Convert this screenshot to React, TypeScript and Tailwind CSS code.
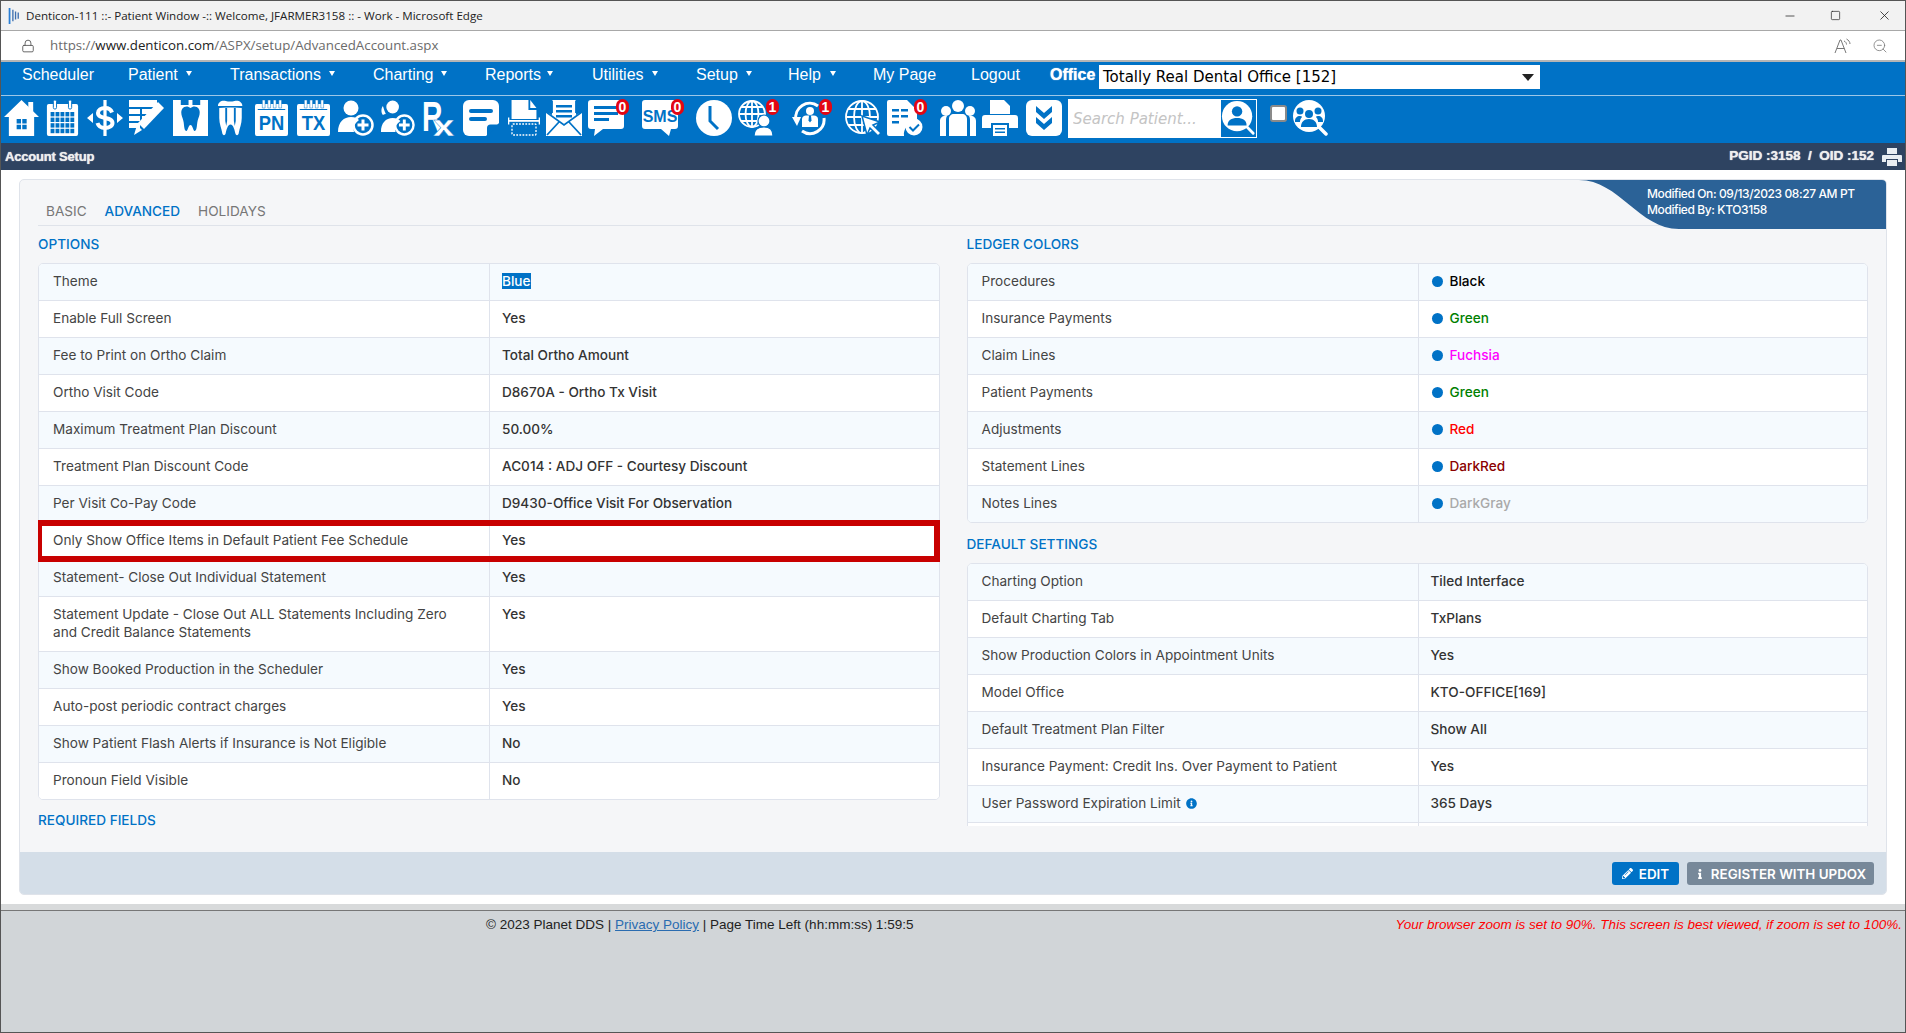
import { Minus, Square, X, Lock, ZoomOut } from 'lucide-react';
import { FaInfo, FaInfoCircle, FaPencilAlt } from 'react-icons/fa';
import type { ReactNode } from 'react';

const BLUE = '#0072c6';

const menu = [
  { label: 'Scheduler', width: 'w-[106px]', caret: '' },
  { label: 'Patient', width: 'w-[102px]', caret: 'left-[58px]' },
  { label: 'Transactions', width: 'w-[143px]', caret: 'left-[99px]' },
  { label: 'Charting', width: 'w-[112px]', caret: 'left-[68px]' },
  { label: 'Reports', width: 'w-[107px]', caret: 'left-[62px]' },
  { label: 'Utilities', width: 'w-[104px]', caret: 'left-[60px]' },
  { label: 'Setup', width: 'w-[92px]', caret: 'left-[50px]' },
  { label: 'Help', width: 'w-[85px]', caret: 'left-[42px]' },
  { label: 'My Page', width: 'w-[98px]', caret: '' },
  { label: 'Logout', width: 'w-[79px]', caret: '' },
];

function Ico({ cls, children, badge, badgeCls }: { cls: string; children: ReactNode; badge?: string; badgeCls?: string }) {
  return (
    <div className={`relative shrink-0 h-[36px] ${cls}`}>
      <svg viewBox="0 0 36 36" preserveAspectRatio="none" className="w-full h-full block" fill="#fff">
        {children}
      </svg>
      {badge && (
        <span className={`absolute -top-[1px] flex items-center justify-center w-[13px] h-[16px] rounded-full bg-[#e30613] text-white text-[14px] leading-none font-bold font-['Liberation_Sans',sans-serif] ${badgeCls}`}>
          {badge}
        </span>
      )}
    </div>
  );
}

const calCells = [0, 1, 2, 3].flatMap((r) => [0, 1, 2, 3, 4].map((c) => ({ x: 5 + c * 5.4, y: 12 + r * 5.6 })));

function IconRow() {
  return (
    <div className="h-[47px] pt-[4px] pl-[3px] flex items-start">
      {/* home */}
      <Ico cls="w-[35px]">
        <path d="M18 0 L36 17 L31 17 L31 36 L5 36 L5 17 L0 17 L9 8.5 Z" />
        <path d="M25 2h5v10l-5-5z" />
        <path fill={BLUE} d="M13 19h4.500v4.500H13zM18.800 19h4.500v4.500h-4.500zM13 24.800h4.500v4.500H13zM18.800 24.800h4.500v4.500h-4.500z" />
      </Ico>
      {/* calendar */}
      <Ico cls="w-[33px] ml-[7px]">
        <rect x="1" y="4" width="34" height="32" rx="2" />
        <rect x="8" y="0" width="3.500" height="9" rx="1.500" stroke={BLUE} />
        <rect x="24.500" y="0" width="3.500" height="9" rx="1.500" stroke={BLUE} />
        {calCells.map((c) => (
          <rect key={`${c.x}-${c.y}`} x={c.x} y={c.y} width="4.200" height="4.400" fill={BLUE} />
        ))}
      </Ico>
      {/* dollar */}
      <Ico cls="w-[36px] ml-[8px]">
        <path d="M0 18l6-5v10zM36 18l-6-5v10z" />
        <path d="M25 12.500c-1-3-4-4.500-7-4.500-4 0-7 2-7 5 0 7 14.500 3 14.500 10 0 3-3.500 5-7.500 5-3.500 0-6.500-1.500-7.500-5" fill="none" stroke="#fff" strokeWidth="4" />
        <rect x="16.400" y="0" width="3.200" height="36" />
      </Ico>
      {/* notes + pencil */}
      <Ico cls="w-[36px] ml-[6px]">
        <path d="M0 0h28v7H0zM0 9h11v5H0zM13 9h13l-5 5h-8zM0 16h11v5H0zM13 16h6l-5 5h-1zM0 23h11v5H0z" />
        <path d="M29 2l6 6-20 21-6-6z" />
        <path d="M8 25l5 5-8 5z" />
      </Ico>
      {/* tooth chart */}
      <Ico cls="w-[35px] ml-[8px]">
        <path d="M0 0h8v5h8V0h4v5h8V0h8v36H0z" />
        <path fill={BLUE} d="M18 8c2-1.500 4-2 6.500-1 2.500 1.200 3.500 4 2.800 7.500-.6 2.800-1.800 4.500-2.300 8-.4 3-.6 8-2.500 8.500-2 .4-2-6-4.500-6s-2.500 6.400-4.500 6c-1.900-.5-2.100-5.500-2.500-8.500-.5-3.500-1.700-5.200-2.300-8-.7-3.500.3-6.300 2.800-7.500 2.500-1 4.500-.5 6.500 1z" />
      </Ico>
      {/* crown */}
      <Ico cls="w-[27px] ml-[9px]">
        <path d="M1 6c0-4 4-6 8-5 3 .8 6 .8 9 0 4-1 8 1 8 5z" transform="scale(1.300 1)" />
        <path d="M3 8c10-1.500 20-1.500 30 0v10c0 6-3 10-4 15-.4 2.500-3.500 3-4.500.5-1-3-2.500-9-6.500-9s-5.500 6-6.500 9c-1 2.500-4 2-4.500-.5C6 28 3 24 3 18z" />
        <path fill={BLUE} d="M11 8h2.500v13l-1.200 5-1.300-5zM22.500 8H25v13l-1.300 5-1.200-5zM3 6h30v1.500H3z" />
      </Ico>
      {/* PN */}
      <Ico cls="w-[33px] ml-[11px]">
        <rect x="0" y="4" width="36" height="32" rx="2" />
        <path d="M8 0h3v8H8zM14 0h3v8h-3zM20 0h3v8h-3zM26 0h3v8h-3z" stroke={BLUE} strokeWidth=".5" />
        <rect x="3" y="9" width="30" height="1" fill={BLUE} />
        <text x="18" y="30" textAnchor="middle" fontFamily="Liberation Sans" fontWeight="700" fontSize="20" fill={BLUE}>PN</text>
      </Ico>
      {/* TX */}
      <Ico cls="w-[33px] ml-[9px]">
        <rect x="0" y="4" width="36" height="32" rx="2" />
        <path d="M8 0h3v8H8zM14 0h3v8h-3zM20 0h3v8h-3zM26 0h3v8h-3z" stroke={BLUE} strokeWidth=".5" />
        <rect x="3" y="9" width="30" height="1" fill={BLUE} />
        <text x="18" y="30" textAnchor="middle" fontFamily="Liberation Sans" fontWeight="700" fontSize="20" fill={BLUE}>TX</text>
      </Ico>
      {/* patient add */}
      <Ico cls="w-[36px] ml-[8px]">
        <circle cx="13" cy="8" r="7.500" />
        <path d="M0 32c0-10 6-15 13-15 4 0 6 1 8 3-4 3-6 7-5 12z" />
        <circle cx="25" cy="25" r="9.500" fill="none" stroke="#fff" strokeWidth="2.500" />
        <path d="M23.500 19.500h3v4h4v3h-4v4h-3v-4h-4v-3h4z" />
      </Ico>
      {/* patients add */}
      <Ico cls="w-[35px] ml-[6px]">
        <circle cx="13" cy="7" r="6.500" />
        <path d="M3 6c-2 2-2 7 0 9 1-.5 2-1 3-1-1-2-2-5-3-8z" />
        <path d="M1 32c0-9 5-14 12-14 4 0 6 1 8 3-4 3-6 6-5 11z" />
        <circle cx="25" cy="25" r="9.500" fill="none" stroke="#fff" strokeWidth="2.500" />
        <path d="M23.500 19.500h3v4h4v3h-4v4h-3v-4h-4v-3h4z" />
      </Ico>
      {/* Rx */}
      <Ico cls="w-[33px] ml-[7px]">
        <text transform="translate(0 31) scale(.72 1)" fontFamily="Liberation Sans" fontWeight="700" fontSize="43">R</text>
        <text transform="translate(12 36) scale(1.400 1)" fontFamily="Liberation Sans" fontWeight="700" fontSize="30" stroke={BLUE} strokeWidth=".4">x</text>
      </Ico>
      {/* sticky note */}
      <Ico cls="w-[36px] ml-[8px]">
        <path d="M6 0h24a6 6 0 0 1 6 6v17L23 36H6a6 6 0 0 1-6-6V6a6 6 0 0 1 6-6z" />
        <path fill={BLUE} d="M8 9h20a1.500 1.500 0 0 1 0 4H8a1.500 1.500 0 0 1 0-4zM8 17h14a1.500 1.500 0 0 1 0 4H8a1.500 1.500 0 0 1 0-4z" />
        <path fill={BLUE} d="M36 24.500 24 36v-8a3.500 3.500 0 0 1 3.500-3.500z" />
      </Ico>
      {/* scan */}
      <Ico cls="w-[32px] ml-[9px]">
        <path d="M4 0h19v10h9v9H4z" />
        <path d="M25 0l7 8h-7z" />
        <rect x="0" y="20" width="36" height="1.800" />
        <rect x="0" y="17.500" width="1.500" height="7" />
        <rect x="34.500" y="17.500" width="1.500" height="7" />
        <rect x="4.500" y="24" width="27" height="11" rx="1" fill="none" stroke="#fff" strokeWidth="1.500" strokeDasharray="2 1.500" />
      </Ico>
      {/* envelope */}
      <Ico cls="w-[36px] ml-[6px]">
        <path d="M6 0h24v15l6-3v24H0V12l6 3z" />
        <path fill="none" stroke={BLUE} strokeWidth="1.800" d="M0 12 18 25 36 12M1 35 13 22M35 35 23 22M6 13V.5M30 13V.5" />
        <path fill={BLUE} d="M10 5h16v2.500H10zM10 10h16v2.500H10zM10 15h16v2.500H10z" />
      </Ico>
      {/* chat */}
      <Ico cls="w-[36px] ml-[6px]" badge="0" badgeCls="left-[28px]">
        <path d="M3 0h30a3 3 0 0 1 3 3v23a3 3 0 0 1-3 3H15L6 36l1-7H3a3 3 0 0 1-3-3V3a3 3 0 0 1 3-3z" />
        <path fill={BLUE} d="M6 6h24v3H6zM6 12h24v3H6zM6 18h15v3H6z" />
      </Ico>
      {/* sms */}
      <Ico cls="w-[36px] ml-[18px]" badge="0" badgeCls="left-[29px]">
        <path d="M3 0h30a3 3 0 0 1 3 3v23a3 3 0 0 1-3 3h-4l-2 7-8-7H3a3 3 0 0 1-3-3V3a3 3 0 0 1 3-3z" />
        <text x="18" y="22" textAnchor="middle" fontFamily="Liberation Sans" fontWeight="700" fontSize="16" fill={BLUE}>SMS</text>
      </Ico>
      {/* clock */}
      <Ico cls="w-[36px] ml-[18px]">
        <circle cx="18" cy="18" r="18" />
        <path d="M14 6v15l8 8" fill="none" stroke={BLUE} strokeWidth="3" />
      </Ico>
      {/* globe person */}
      <Ico cls="w-[36px] ml-[5px]" badge="1" badgeCls="left-[29px]">
        <g fill="none" stroke="#fff" strokeWidth="1.800">
          <circle cx="15" cy="14" r="13" />
          <ellipse cx="15" cy="14" rx="6.500" ry="13" />
          <path d="M2 14h26M4 7h22M4 21h22M15 1v26" />
        </g>
        <circle cx="27" cy="21" r="6" stroke={BLUE} strokeWidth="1.200" />
        <path d="M17 36c0-6 4-9 10-9s9 3 9 9z" stroke={BLUE} strokeWidth="1.200" />
      </Ico>
      {/* sync person */}
      <Ico cls="w-[36px] ml-[19px]" badge="1" badgeCls="left-[27px]">
        <path d="M4 20A14 14 0 0 1 26 6" fill="none" stroke="#fff" strokeWidth="3" />
        <path d="M0 17h9l-4 9z" />
        <path d="M32 18A14 14 0 0 1 10 31" fill="none" stroke="#fff" strokeWidth="3" />
        <circle cx="18" cy="11" r="4" />
        <path d="M10 27V19c0-2 2-3.500 4-3.500h8c2 0 4 1.500 4 3.500v8z" />
        <path fill={BLUE} d="M17 15.500h2l.5 5-1.500 2-1.500-2z" />
      </Ico>
      {/* globe cursor */}
      <Ico cls="w-[36px] ml-[17px]">
        <g fill="none" stroke="#fff" strokeWidth="1.800">
          <circle cx="17" cy="17" r="16" />
          <ellipse cx="17" cy="17" rx="8" ry="16" />
          <path d="M1 17h32M3 9h28M3 25h28M17 1v32" />
        </g>
        <path d="M17 16l18 6-7 3 8 8-3 3-8-8-3 7z" stroke={BLUE} strokeWidth="1.500" />
      </Ico>
      {/* doc check */}
      <Ico cls="w-[36px] ml-[6px]" badge="0" badgeCls="left-[27px]">
        <path d="M2 0h18l10 10v14c-8-1-14 4-13 12H2a2 2 0 0 1-2-2V2a2 2 0 0 1 2-2z" />
        <path fill={BLUE} d="M5 9h7v2.500H5zM14 9h7v2.500h-7zM5 15h7v2.500H5zM14 15h7v2.500h-7zM5 21h7v2.500H5z" />
        <circle cx="27" cy="27" r="8.500" />
        <path d="M22.500 27l3.500 3.500 6-6" fill="none" stroke={BLUE} strokeWidth="2" />
      </Ico>
      {/* people */}
      <Ico cls="w-[36px] ml-[17px]">
        <circle cx="6" cy="11" r="5" />
        <circle cx="30" cy="11" r="5" />
        <circle cx="18" cy="6" r="6" />
        <path d="M0 36V21c0-3 2-5 5-5h2c-1 2-1 3-1 5v15zM36 36V21c0-3-2-5-5-5h-2c1 2 1 3 1 5v15zM9 36V19c0-3 2-5 5-5h8c3 0 5 2 5 5v17z" />
      </Ico>
      {/* printer */}
      <Ico cls="w-[36px] ml-[6px]">
        <path d="M8 0h14l6 6v8H8z" />
        <path d="M3 15h30a3 3 0 0 1 3 3v10H27v-5H9v5H0V18a3 3 0 0 1 3-3z" />
        <path d="M11 25h14v11H11z" />
        <path fill={BLUE} d="M13 28h10v1.500H13zM13 31.500h10V33H13z" />
      </Ico>
      {/* expand */}
      <Ico cls="w-[36px] ml-[8px]">
        <rect width="36" height="36" rx="6" />
        <path d="M10 6v6l8 7 8-7V6l-8 7zM10 17v6l8 7 8-7v-6l-8 7z" fill={BLUE} />
      </Ico>
      {/* search patient */}
      <div className="ml-[6px] -mt-[1px] flex w-[189px] h-[39px] bg-white shrink-0">
        <input
          readOnly
          placeholder="Search Patient..."
          className="w-[152px] h-full pl-[5px] text-[15px] italic font-['DejaVu_Sans',sans-serif] placeholder:text-[#c4c4c4] outline-none"
        />
        <div className="w-[37px] h-full bg-[#0072c6] border border-white">
          <svg viewBox="0 0 37 39" className="w-full h-full block">
            <circle cx="17" cy="17" r="16" fill="#fff" />
            <path d="M27 28l7 7" stroke="#fff" strokeWidth="3" strokeLinecap="round" />
            <circle cx="17" cy="12" r="5.500" fill={BLUE} />
            <path d="M7 27c0-6 4-8 10-8s10 2 10 8z" fill={BLUE} />
          </svg>
        </div>
      </div>
      <div className="ml-[13px] mt-[5px] w-[17px] h-[17px] bg-white border-2 border-[#8a8a8a] rounded-[3px] shrink-0" />
      <Ico cls="w-[36px] ml-[6px]">
        <circle cx="16" cy="16" r="16" />
        <path d="M26 27l7 7" stroke="#fff" strokeWidth="3.500" strokeLinecap="round" />
        <g fill={BLUE}>
          <circle cx="7" cy="11" r="3.500" />
          <circle cx="25" cy="11" r="3.500" />
          <circle cx="16" cy="14" r="4" />
          <path d="M2 21c0-3 2-5 5-5 2 0 2 1 2 1-2 2-2 4-2 5H2zM30 21c0-3-2-5-5-5-2 0-2 1-2 1 2 2 2 4 2 5h5zM8 27c0-5 3-8 8-8s8 3 8 8z" />
        </g>
      </Ico>
    </div>
  );
}

type Row = { label: ReactNode; value: ReactNode };

function Table({ rows }: { rows: Row[] }) {
  return (
    <div className="border border-[#dfe3ec] rounded-[5px] overflow-hidden bg-white">
      {rows.map((row, i) => (
        <div key={i} className={`flex border-b border-[#dfe3ec] last:border-b-0 ${i % 2 === 0 ? 'bg-[#f5fafe]' : 'bg-white'}`}>
          <div className="w-[451px] shrink-0 border-r border-[#dfe3ec] pl-[14px] pr-[30px] pt-[8px] pb-[10px] text-[#444]">
            {row.label}
          </div>
          <div className="flex-1 px-[12px] pt-[8px] pb-[10px] font-medium text-[#333]">{row.value}</div>
        </div>
      ))}
    </div>
  );
}

function Ledger({ color, name }: { color: string; name: string }) {
  return (
    <span className={`flex items-center gap-[7px] ${color}`}>
      <span className="w-[11px] h-[11px] rounded-full bg-[#0072c6] ml-[1px]" />
      {name}
    </span>
  );
}

const options: Row[] = [
  { label: 'Theme', value: <span className="bg-[#0072c6] text-white">Blue</span> },
  { label: 'Enable Full Screen', value: 'Yes' },
  { label: 'Fee to Print on Ortho Claim', value: 'Total Ortho Amount' },
  { label: 'Ortho Visit Code', value: 'D8670A - Ortho Tx Visit' },
  { label: 'Maximum Treatment Plan Discount', value: '50.00%' },
  { label: 'Treatment Plan Discount Code', value: 'AC014 : ADJ OFF - Courtesy Discount' },
  { label: 'Per Visit Co-Pay Code', value: 'D9430-Office Visit For Observation' },
  { label: 'Only Show Office Items in Default Patient Fee Schedule', value: 'Yes' },
  { label: 'Statement- Close Out Individual Statement', value: 'Yes' },
  { label: 'Statement Update - Close Out ALL Statements Including Zero and Credit Balance Statements', value: 'Yes' },
  { label: 'Show Booked Production in the Scheduler', value: 'Yes' },
  { label: 'Auto-post periodic contract charges', value: 'Yes' },
  { label: 'Show Patient Flash Alerts if Insurance is Not Eligible', value: 'No' },
  { label: 'Pronoun Field Visible', value: 'No' },
];

const ledger: Row[] = [
  { label: 'Procedures', value: <Ledger color="text-black" name="Black" /> },
  { label: 'Insurance Payments', value: <Ledger color="text-[#008000]" name="Green" /> },
  { label: 'Claim Lines', value: <Ledger color="text-[#ff00ff]" name="Fuchsia" /> },
  { label: 'Patient Payments', value: <Ledger color="text-[#008000]" name="Green" /> },
  { label: 'Adjustments', value: <Ledger color="text-[#ff0000]" name="Red" /> },
  { label: 'Statement Lines', value: <Ledger color="text-[#8b0000]" name="DarkRed" /> },
  { label: 'Notes Lines', value: <Ledger color="text-[#a9a9a9]" name="DarkGray" /> },
];

const defaults: Row[] = [
  { label: 'Charting Option', value: 'Tiled Interface' },
  { label: 'Default Charting Tab', value: 'TxPlans' },
  { label: 'Show Production Colors in Appointment Units', value: 'Yes' },
  { label: 'Model Office', value: 'KTO-OFFICE[169]' },
  { label: 'Default Treatment Plan Filter', value: 'Show All' },
  { label: 'Insurance Payment: Credit Ins. Over Payment to Patient', value: 'Yes' },
  {
    label: (
      <span className="flex items-center gap-[5px]">
        User Password Expiration Limit
        <FaInfoCircle size={11} className="text-[#0072c6]" />
      </span>
    ),
    value: '365 Days',
  },
  { label: <span>&nbsp;</span>, value: '' },
];

function SectionTitle({ children, cls }: { children: ReactNode; cls: string }) {
  return <div className={`flex items-center font-medium text-[#0072c6] ${cls}`}>{children}</div>;
}

export default function App() {
  return (
    <div className="w-[1906px] h-[1033px] overflow-hidden flex flex-col border border-[#555] bg-white font-['Liberation_Sans',sans-serif]">
      {/* window title */}
      <div className="h-[30px] shrink-0 bg-[#f2f2f2] flex items-center pl-[7px] border-b border-[#a8a8a8] font-['Open_Sans',sans-serif] text-[11.6px] text-[#222]">
        <svg viewBox="0 0 12 18" className="w-[12px] h-[16px] mr-[6px]">
          <path d="M0 0h2v18H0z" fill="#2a7fd6" />
          <path d="M4 2h1.500v13H4zM7 4h1.500v9H7zM10 5h1.500v7H10z" fill="#3d6fb0" />
        </svg>
        Denticon-111 ::- Patient Window -:: Welcome, JFARMER3158 :: - Work - Microsoft Edge
        <div className="ml-auto flex items-center text-[#222]">
          <Minus size={14} strokeWidth={1.3} className="mr-[33px]" />
          <Square size={11} strokeWidth={1.5} className="mr-[36px]" />
          <X size={15} strokeWidth={1.3} className="mr-[13px]" />
        </div>
      </div>
      {/* address bar */}
      <div className="h-[31px] shrink-0 bg-white flex items-center border-b-2 border-[#b5b5b5] pl-[20px] font-['Open_Sans',sans-serif] text-[13.3px] text-[#6b6b6b]">
        <Lock size={14} strokeWidth={1.5} className="mr-[15px] text-[#555]" />
        <span>
          https://<span className="text-[#222]">www.denticon.com</span>/ASPX/setup/AdvancedAccount.aspx
        </span>
        <div className="ml-auto flex items-center text-[#777]">
          <svg viewBox="0 0 18 16" className="w-[18px] h-[16px] mr-[20px]" fill="none" stroke="#777" strokeWidth="1">
            <path d="M1 15 6 2h1l5 13M3 10.500h7.500M10 3c1.500.5 2.500 2 2.500 3.500M12.500 1c2 1 3.500 3 3.500 5" />
          </svg>
          <ZoomOut size={16} strokeWidth={1.2} className="mr-[17px]" />
        </div>
      </div>
      {/* menu */}
      <div className="bg-[#0072c6] shrink-0">
        <div className="h-[34px] flex items-center pl-[21px] border-b border-[#9cc7e8] text-white text-[16px]">
          {menu.map((m) => (
            <div key={m.label} className={`relative shrink-0 -mt-[8px] ${m.width}`}>
              {m.label}
              {m.caret && (
                <span className={`absolute top-[8px] w-0 h-0 border-x-[3px] border-x-transparent border-t-[5px] border-t-white ${m.caret}`} />
              )}
            </div>
          ))}
          <div className="w-[49px] -mt-[8px] font-bold [text-shadow:0_0_1px_#fff]">Office</div>
          <div className="w-[441px] h-[24px] -mt-[3px] bg-white text-black flex items-center justify-between pl-[4px] pr-[6px] font-['DejaVu_Sans',sans-serif] text-[15px]">
            Totally Real Dental Office [152]
            <span className="w-0 h-0 border-x-[6px] border-x-transparent border-t-[7px] border-t-[#222]" />
          </div>
        </div>
        <IconRow />
      </div>
      {/* page header */}
      <div className="h-[27px] shrink-0 bg-[#2e4361] flex items-center justify-between pl-[4px] pr-[3px] font-bold text-[#eee] [text-shadow:0_0_1px_#fff]">
        <span className="text-[13px] tracking-[-0.2px]">Account Setup</span>
        <span className="flex items-center text-[13.5px]">
          PGID :3158 &nbsp;/&nbsp; OID :152
          <svg viewBox="0 0 20 18" className="w-[20px] h-[18px] ml-[8px]" fill="#e8edf2">
            <path d="M5 0h10v6H5zM1 7h18a1 1 0 0 1 1 1v6h-4v-3H4v3H0V8a1 1 0 0 1 1-1zM5 12h10v6H5z" />
          </svg>
        </span>
      </div>
      {/* panel */}
      <div className="h-[734px] shrink-0 pt-[9px] pl-[18px] pr-[18px]">
        <div className="relative h-[716px] flex flex-col rounded-[5px] border border-[#dfe3ea] bg-[#f5f6f8] overflow-hidden font-['Inter',sans-serif] text-[13.6px] leading-[18px]">
          <div className="h-[672px] shrink-0 px-[18px]">
            <div className="h-[46px] flex items-end gap-[18px] pl-[8px] pb-[5px] border-b border-[#dfe3ea] text-[#777]">
              <span>BASIC</span>
              <span className="text-[#0072c6] font-medium">ADVANCED</span>
              <span>HOLIDAYS</span>
            </div>
            <div className="grid grid-cols-2 gap-x-[27px] h-[600px] overflow-hidden">
              <div className="relative">
                <SectionTitle cls="h-[37px] pb-[2px]">OPTIONS</SectionTitle>
                <Table rows={options} />
                <SectionTitle cls="h-[40px]">REQUIRED FIELDS</SectionTitle>
                {/* highlight drawn over the row */}
                <div className="absolute top-[294px] -left-[2px] right-0 h-[42px] border-[6px] border-[#c80000]" />
              </div>
              <div>
                <SectionTitle cls="h-[37px] pb-[2px]">LEDGER COLORS</SectionTitle>
                <Table rows={ledger} />
                <SectionTitle cls="h-[40px] pt-[2px]">DEFAULT SETTINGS</SectionTitle>
                <Table rows={defaults} />
              </div>
            </div>
          </div>
          <div className="flex-1 bg-[#d4dee8] flex items-start justify-end gap-[8px] pt-[10px] pr-[12px] text-white text-[13.4px] font-semibold">
            <button className="h-[23px] w-[67px] rounded-[3px] bg-[#0072c6] flex items-center justify-center gap-[6px]">
              <FaPencilAlt size={11} />
              EDIT
            </button>
            <button className="h-[23px] w-[187px] rounded-[3px] bg-[#778899] flex items-center justify-center gap-[6px]">
              <FaInfo size={10} />
              REGISTER WITH UPDOX
            </button>
          </div>
          {/* modified-by tab */}
          <div className="absolute top-0 right-0 w-[307px] h-[49px]">
            <svg viewBox="0 0 307 49" className="absolute inset-0 w-full h-full" preserveAspectRatio="none">
              <path d="M0 0H307V49H100C60 49 40 0 0 0Z" fill="#2b6297" />
            </svg>
            <div className="absolute left-[68px] top-[6px] text-white text-[12px] leading-[16px] font-medium tracking-[-0.4px]">
              <div>Modified On: 09/13/2023 08:27 AM PT</div>
              <div>Modified By: KTO3158</div>
            </div>
          </div>
        </div>
      </div>
      {/* footer */}
      <div className="flex-1 bg-[#d1d5d8] border-t-[6px] border-[#d8dadb]">
        <div className="h-full border-t border-[#777] flex justify-between pt-[4px] pr-[3px] pl-[485px] text-[13.5px] text-[#222]">
          <span>
            © 2023 Planet DDS | <span className="text-[#2a6cb0] underline">Privacy Policy</span> | Page Time Left (hh:mm:ss) 1:59:5
          </span>
          <span className="italic text-[#ff0000]">Your browser zoom is set to 90%. This screen is best viewed, if zoom is set to 100%.</span>
        </div>
      </div>
    </div>
  );
}
